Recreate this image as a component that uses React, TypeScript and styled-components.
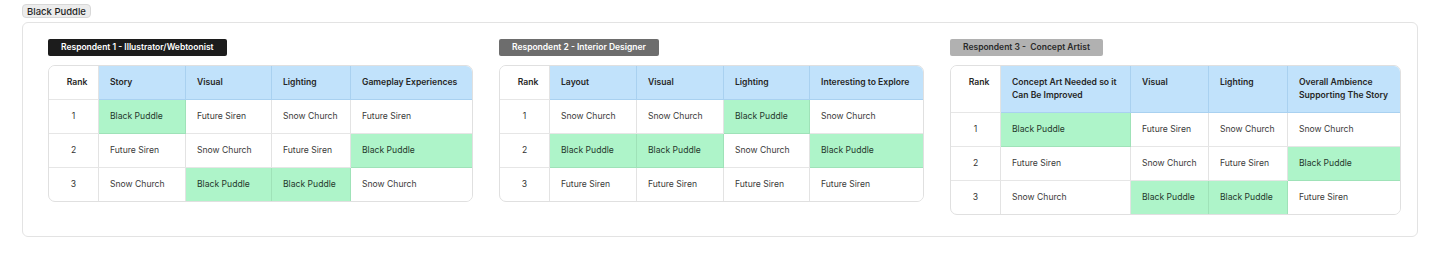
import styled, { createGlobalStyle } from 'styled-components';

type Tone = 'dark' | 'mid' | 'light';

interface Column {
    title: string;
    width: number;
}

interface Respondent {
    label: string;
    tone: Tone;
    columns: Column[];
    rows: string[][];
}

const WINNER = 'Black Puddle';

const respondents: Respondent[] = [
    {
        label: 'Respondent 1 - Illustrator/Webtoonist',
        tone: 'dark',
        columns: [
            { title: 'Rank', width: 51 },
            { title: 'Story', width: 87 },
            { title: 'Visual', width: 86 },
            { title: 'Lighting', width: 79 },
            { title: 'Gameplay Experiences', width: 121 },
        ],
        rows: [
            ['Black Puddle', 'Future Siren', 'Snow Church', 'Future Siren'],
            ['Future Siren', 'Snow Church', 'Future Siren', 'Black Puddle'],
            ['Snow Church', 'Black Puddle', 'Black Puddle', 'Snow Church'],
        ],
    },
    {
        label: 'Respondent 2 - Interior Designer',
        tone: 'mid',
        columns: [
            { title: 'Rank', width: 51 },
            { title: 'Layout', width: 87 },
            { title: 'Visual', width: 87 },
            { title: 'Lighting', width: 86 },
            { title: 'Interesting to Explore', width: 113 },
        ],
        rows: [
            ['Snow Church', 'Snow Church', 'Black Puddle', 'Snow Church'],
            ['Black Puddle', 'Black Puddle', 'Snow Church', 'Black Puddle'],
            ['Future Siren', 'Future Siren', 'Future Siren', 'Future Siren'],
        ],
    },
    {
        label: 'Respondent 3 -  Concept Artist',
        tone: 'light',
        columns: [
            { title: 'Rank', width: 51 },
            { title: 'Concept Art Needed so it Can Be Improved', width: 130 },
            { title: 'Visual', width: 78 },
            { title: 'Lighting', width: 79 },
            { title: 'Overall Ambience Supporting The Story', width: 112 },
        ],
        rows: [
            ['Black Puddle', 'Future Siren', 'Snow Church', 'Snow Church'],
            ['Future Siren', 'Snow Church', 'Future Siren', 'Black Puddle'],
            ['Snow Church', 'Black Puddle', 'Black Puddle', 'Future Siren'],
        ],
    },
];

const GlobalStyle = createGlobalStyle`
    body {
        margin: 0;
        background: #ffffff;
        font-family: Inter, 'Noto Sans', 'Liberation Sans', sans-serif;
        color: #2b2b2b;
    }
`;

const App = () => (
    <>
        <GlobalStyle />
        <Page>
            <Tag>Black Puddle</Tag>
            <Card>
                {respondents.map((r) => (
                    <Block key={r.label}>
                        <Label $tone={r.tone}>{r.label}</Label>
                        <TableWrap>
                            <Table
                                style={{ width: r.columns.reduce((s, c) => s + c.width, 0) - 2 }}
                            >
                                <colgroup>
                                    {r.columns.map((c, i) => (
                                        <col
                                            key={c.title}
                                            style={{ width: i === 0 ? c.width - 1 : c.width }}
                                        />
                                    ))}
                                </colgroup>
                                <thead>
                                    <tr>
                                        {r.columns.map((c, i) => (
                                            <HeadCell key={c.title} $rank={i === 0}>
                                                {c.title}
                                            </HeadCell>
                                        ))}
                                    </tr>
                                </thead>
                                <tbody>
                                    {r.rows.map((row, ri) => (
                                        <tr key={ri}>
                                            <RankCell>{ri + 1}</RankCell>
                                            {row.map((v, ci) => (
                                                <Cell key={ci} $hit={v === WINNER}>
                                                    {v}
                                                </Cell>
                                            ))}
                                        </tr>
                                    ))}
                                </tbody>
                            </Table>
                        </TableWrap>
                    </Block>
                ))}
            </Card>
        </Page>
    </>
);

export default App;

const Page = styled.div`
    padding: 4px 22px 0;
`;

const Tag = styled.div`
    display: flex;
    align-items: center;
    justify-content: center;
    height: 14px;
    width: 69px;
    box-sizing: border-box;
    background: #ececec;
    border: 1px solid #d8d8d8;
    border-radius: 4px;
    font-size: 9.5px;
    font-weight: 500;
    white-space: nowrap;
    color: #1f1f1f;
`;

const Card = styled.div`
    margin-top: 4px;
    width: 1396px;
    height: 215px;
    box-sizing: border-box;
    border: 1px solid #e3e3e3;
    border-radius: 6px;
    padding: 16px 25px 0;
    display: flex;
    gap: 26px;
    align-items: flex-start;
`;

const Block = styled.div`
    display: flex;
    flex-direction: column;
    align-items: flex-start;
    gap: 9px;
`;

const toneBg: Record<Tone, string> = {
    dark: '#1c1c1c',
    mid: '#6d6d6d',
    light: '#b1b1b1',
};

const Label = styled.div<{ $tone: Tone }>`
    height: 17px;
    line-height: 17px;
    padding: 0 13px;
    border-radius: 2px;
    font-size: 8.5px;
    font-weight: 600;
    white-space: pre;
    background: ${(p) => toneBg[p.$tone]};
    color: ${(p) => (p.$tone === 'light' ? '#2a2a2a' : '#ffffff')};
`;

const TableWrap = styled.div`
    border: 1px solid #e0e0e0;
    border-radius: 7px;
    overflow: hidden;
`;

const Table = styled.table`
    border-collapse: separate;
    border-spacing: 0;
    table-layout: fixed;
    font-size: 8.6px;
    line-height: 13px;

    tr > *:last-child {
        border-right: none;
    }

    tbody tr:last-child > * {
        border-bottom: none;
    }
`;

const HeadCell = styled.th<{ $rank: boolean }>`
    text-align: ${(p) => (p.$rank ? 'center' : 'left')};
    vertical-align: top;
    padding: 10px 4px 10px 11px;
    font-weight: 600;
    color: #262626;
    background: ${(p) => (p.$rank ? '#ffffff' : '#c1e2fb')};
    border-right: 1px solid ${(p) => (p.$rank ? '#e3e3e3' : '#a9d1f0')};
    border-bottom: 1px solid ${(p) => (p.$rank ? '#e6e6e6' : '#a9d1f0')};
`;

const RankCell = styled.td`
    text-align: center;
    padding: 10px 12px;
    color: #333333;
    border-right: 1px solid #e3e3e3;
    border-bottom: 1px solid #e6e6e6;
`;

const Cell = styled.td<{ $hit: boolean }>`
    padding: 10px 12px 10px 11px;
    white-space: nowrap;
    color: ${(p) => (p.$hit ? '#24382c' : '#3a3a3a')};
    background: ${(p) => (p.$hit ? '#aef4c9' : '#ffffff')};
    border-right: 1px solid ${(p) => (p.$hit ? '#9fe2b8' : '#e3e3e3')};
    border-bottom: 1px solid ${(p) => (p.$hit ? '#9fe2b8' : '#e6e6e6')};
`;
